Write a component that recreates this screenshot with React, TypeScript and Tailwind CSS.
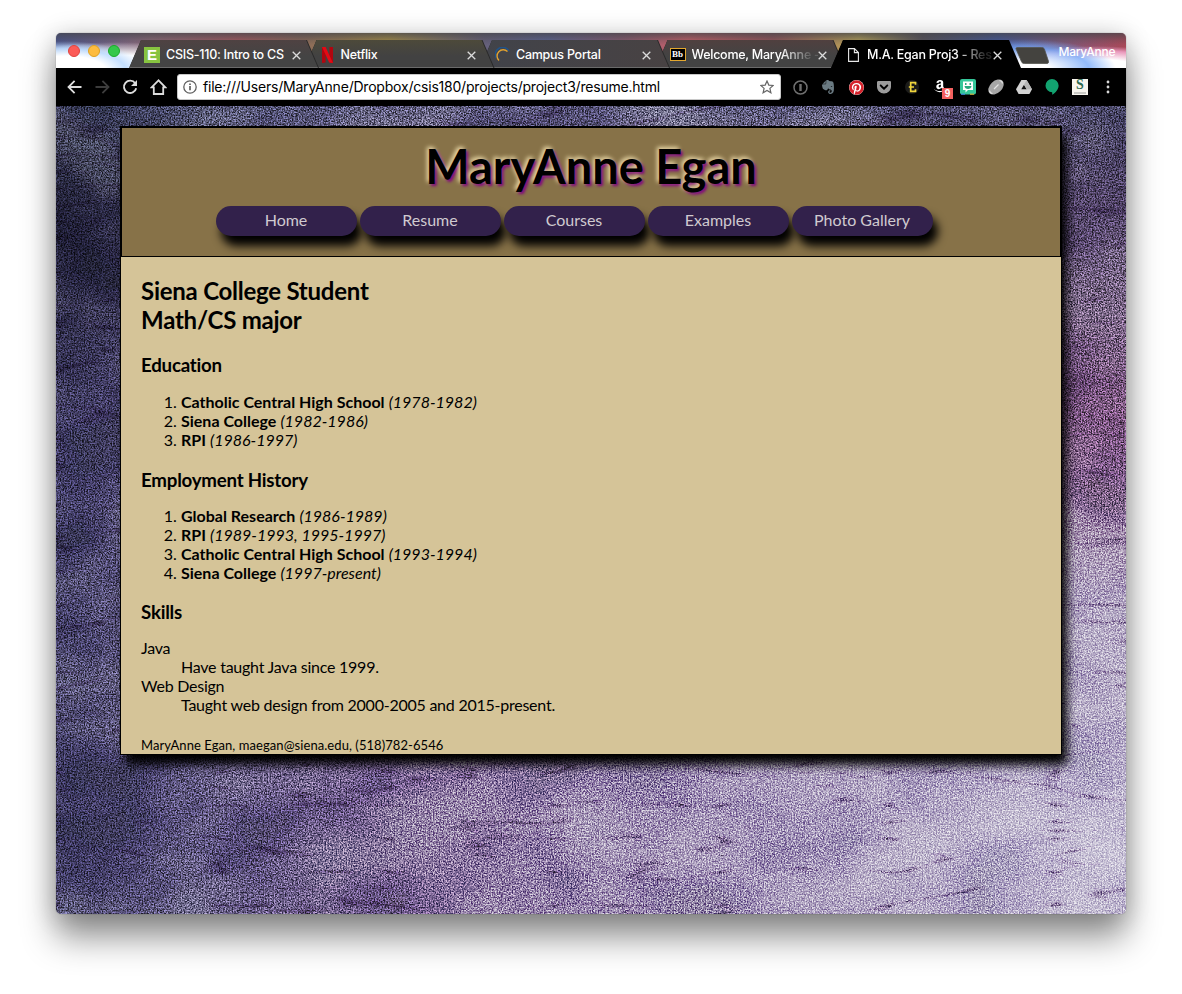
import React from "react";
import { FaPinterest, FaEvernote, FaAmazon, FaGetPocket } from "react-icons/fa";

type Tab = { title: string; icon: React.ReactNode; iconBox: string; fade?: boolean; active?: boolean; z: string; tint: string };

const NetflixIcon = () => (
  <svg width="11" height="16" viewBox="0 0 11 16">
    <path d="M0 0h3.6v15.4L0 16z" fill="#b1060f" />
    <path d="M7.4 0H11v16l-3.6-.6z" fill="#b1060f" />
    <path d="M0 0h3.6L11 16l-3.8-.6z" fill="#e50914" />
  </svg>
);

const PortalIcon = () => (
  <svg width="16" height="16" viewBox="0 0 16 16" fill="none">
    <path d="M1.2 11A7 7 0 0 1 14 4" stroke="#1f5288" strokeWidth="1.5" />
    <path d="M4 13.5A5.5 5.5 0 0 1 12.5 4.5" stroke="#e0a030" strokeWidth="1.4" />
  </svg>
);

const FileIcon = () => (
  <svg width="11" height="14" viewBox="0 0 11 14" fill="none" stroke="#e8e8e8" strokeWidth="1.1">
    <path d="M.6.6h5.8l4 4v8.8H.6z" />
    <path d="M6.4.6v4h4" />
  </svg>
);

const tabs: Tab[] = [
  {
    title: "CSIS-110: Intro to CS",
    icon: <span className="flex h-4 w-4 items-center justify-center bg-[#87c440] font-['Liberation_Sans'] text-[15px] leading-none font-bold text-white">E</span>,
    iconBox: "ml-[15px] w-[22px]",
    z: "z-40",
    tint: "bg-[linear-gradient(#4f4242,#444_60%)]",
  },
  { title: "Netflix", icon: <NetflixIcon />, iconBox: "ml-[17px] w-[19px]", z: "z-30", tint: "bg-[linear-gradient(#4d4a3a,#424242_60%)]" },
  { title: "Campus Portal", icon: <PortalIcon />, iconBox: "ml-[15px] w-[21px]", z: "z-20", tint: "bg-[linear-gradient(90deg,#41434a,#484243)]" },
  {
    title: "Welcome, MaryAnne -",
    icon: <span className="flex h-[13px] w-4 items-center justify-center border border-[#e3a72f] bg-black font-['Liberation_Serif'] text-[9px] leading-none font-bold text-white">Bb</span>,
    iconBox: "ml-[14px] w-[22px]",
    fade: true,
    z: "z-10",
    tint: "bg-[linear-gradient(#50403f,#434343_60%)]",
  },
  { title: "M.A. Egan Proj3 - Res", icon: <FileIcon />, iconBox: "ml-[17px] w-[19px]", fade: true, active: true, z: "z-50", tint: "bg-black" },
];

const CloseIcon = () => (
  <svg width="9" height="9" viewBox="0 0 9 9" stroke="#dcdcdc" strokeWidth="1.3">
    <path d="M.7.7l7.6 7.6M8.3.7L.7 8.3" />
  </svg>
);

function BrowserTab({ tab }: { tab: Tab }) {
  return (
    <div className={`relative -mr-[14.5px] h-7 w-[190px] shrink-0 [clip-path:polygon(0_100%,12px_0,178px_0,100%_100%)] ${tab.z} ${tab.active ? "bg-black" : "bg-[#292929]"}`}>
      <div className={`flex h-full w-[189px] items-center [clip-path:polygon(0_100%,12px_0,177px_0,100%_100%)] ${tab.tint} ${tab.active ? "" : "border-b border-[#6b6b6b]"}`}>
        <span className={`flex shrink-0 items-center pt-0.5 ${tab.iconBox}`}>{tab.icon}</span>
        <span className={`w-[126px] shrink-0 pt-[3px] font-[Inter] text-[12.5px] font-medium tracking-[-0.02em] whitespace-nowrap text-white ${tab.fade ? "[mask-image:linear-gradient(90deg,#000_70%,rgba(0,0,0,0.15)_94%)]" : ""}`}>{tab.title}</span>
        <span className="flex shrink-0 pt-[3px]"><CloseIcon /></span>
      </div>
    </div>
  );
}

const Slot = ({ children }: { children: React.ReactNode }) => <span className="flex w-7 shrink-0 items-center justify-center">{children}</span>;

function Toolbar() {
  return (
    <div className="flex h-[38px] items-center bg-black pl-1">
      <Slot>
        <svg width="15" height="14" viewBox="0 0 15 14" fill="none" stroke="#dcdcdc" strokeWidth="1.8"><path d="M14.5 7H1.8M7.6.9L1.5 7l6.1 6.1" /></svg>
      </Slot>
      <Slot>
        <svg width="15" height="14" viewBox="0 0 15 14" fill="none" stroke="#3c3c3c" strokeWidth="1.8"><path d="M.5 7h12.7M7.4.9L13.5 7l-6.1 6.1" /></svg>
      </Slot>
      <Slot>
        <svg width="16" height="16" viewBox="0 0 16 16" fill="none"><path d="M13.2 4.2A6.2 6.2 0 1 0 14.2 9.3" stroke="#dcdcdc" strokeWidth="1.9" /><path d="M15 1v6H9z" fill="#dcdcdc" /></svg>
      </Slot>
      <Slot>
        <svg width="17" height="16" viewBox="0 0 17 16" fill="none" stroke="#dcdcdc" strokeWidth="1.8"><path d="M8.5 1.4L1.6 8.4h2.2V15h9.4V8.4h2.2z" /></svg>
      </Slot>
      <div className="ml-[5px] flex h-[26px] w-[604px] shrink-0 items-center rounded-[3px] border border-[#c8c8c8] bg-white">
        <svg className="ml-[5px] shrink-0" width="14" height="14" viewBox="0 0 14 14" fill="none" stroke="#5f5f5f" strokeWidth="1.3"><circle cx="7" cy="7" r="6.2" /><path d="M7 6v4.3M7 3.4v1.5" strokeWidth="1.7" /></svg>
        <span className="mb-0.5 ml-[6px] flex-1 font-[Inter] text-[14px] tracking-[-0.015em] whitespace-nowrap text-black">file:///Users/MaryAnne/Dropbox/csis180/projects/project3/resume.html</span>
        <svg className="mr-[6px] shrink-0" width="14" height="14" viewBox="0 0 14 14" fill="none" stroke="#666" strokeWidth="1.2"><path d="M7 1l1.8 4.1 4.4.4-3.3 2.9 1 4.4L7 10.5l-3.9 2.3 1-4.4L.8 5.500l4.400-.4z" /></svg>
      </div>
      <div className="ml-[5px] flex items-center">
        <Slot>
          <svg width="15" height="15" viewBox="0 0 15 15" fill="none" stroke="#707070"><circle cx="7.500" cy="7.500" r="6.500" strokeWidth="1.500" /><path d="M7.500 4v7" strokeWidth="2.400" /></svg>
        </Slot>
        <Slot><FaEvernote size={16} color="#6a7a82" /></Slot>
        <Slot><span className="flex rounded-full bg-white"><FaPinterest size={15} color="#d5222b" /></span></Slot>
        <Slot><FaGetPocket size={16} color="#9c9c9c" /></Slot>
        <Slot>
          <svg width="14" height="14" viewBox="0 0 14 14"><circle cx="7" cy="7" r="7" fill="#1c1c1a" /><path d="M10.500 4.800V2.700H5.700v8.600h4.800V9.200M3.800 7H9" fill="none" stroke="#f0d53c" strokeWidth="1.700" /></svg>
        </Slot>
        <Slot>
          <span className="relative flex h-4 w-4 justify-center">
            <FaAmazon size={14} color="#ffffff" />
            <span className="absolute top-[9px] left-[10px] flex h-[11px] w-[11px] items-center justify-center bg-[#f4605f] font-['Liberation_Sans'] text-[10px] leading-none font-bold text-white">9</span>
          </span>
        </Slot>
        <Slot>
          <svg width="16" height="16" viewBox="0 0 16 16"><rect width="16" height="15.500" rx="2" fill="#35c79a" /><path d="M3 2.500h10v8.500H8l-2.500 2.500V11H3z" fill="#fff" /><path d="M5 4h1.500v2H5zM9.500 4H11v2H9.500zM4.500 7h7c0 4-7 4-7 0z" fill="#27a77e" /><path d="M1 15.200h4" stroke="#4285f4" /><path d="M10 15.200h4" stroke="#f0b030" /></svg>
        </Slot>
        <Slot>
          <svg width="16" height="16" viewBox="0 0 16 16"><ellipse cx="8" cy="8" rx="9" ry="6" transform="rotate(-44 8 8)" fill="#a6a6a6" /><path d="M6 10l4.500-4.500M11.500 1.500c1.500.2 2.800 1.300 3 3M1.500 11.500c.2 1.500 1.300 2.800 3 3" fill="none" stroke="#e4e4e4" strokeWidth="1.200" /></svg>
        </Slot>
        <Slot>
          <svg width="16" height="14" viewBox="0 0 16 14"><path d="M5.400 0h5.200L16 9.300 13.400 14H2.600L0 9.300z" fill="#d2d2d2" /><path d="M8 4.700l2.700 4.600H5.300z" fill="#111" /><path d="M10.600 0L16 9.300h-5.300L8 4.700z" fill="#b5b5b5" /></svg>
        </Slot>
        <Slot>
          <svg width="14" height="16" viewBox="0 0 14 16"><path d="M7 0a6.600 6.600 0 0 1 6.600 6.600c0 3.800-3 7.400-6.400 9.200v-2.600A6.600 6.600 0 1 1 7 0z" fill="#12a370" /></svg>
        </Slot>
        <Slot><span className="flex h-4 w-4 flex-col items-center bg-[#f7f5ee] font-['Liberation_Serif'] text-[14px] leading-[12px] font-bold text-[#2f6a50]">S<span className="mt-px block h-[2px] w-3 bg-[#c9c9c4]" /></span></Slot>
        <Slot>
          <svg width="4" height="14" viewBox="0 0 4 14" fill="#d8d8d8"><circle cx="2" cy="2" r="1.400" /><circle cx="2" cy="7" r="1.400" /><circle cx="2" cy="12" r="1.400" /></svg>
        </Slot>
      </div>
    </div>
  );
}

function Texture() {
  return (
    <div className="absolute inset-0 isolate overflow-hidden">
      <div className="absolute inset-0 bg-[radial-gradient(ellipse_180px_320px_at_0%_0%,rgba(6,8,18,0.95)_0%,rgba(10,12,25,0.65)_45%,transparent_100%),radial-gradient(ellipse_at_100%_0%,rgba(62,46,74,0.9)_0%,transparent_32%),radial-gradient(ellipse_at_100%_38%,rgba(122,80,120,0.85)_0%,transparent_26%),radial-gradient(ellipse_at_100%_92%,#c2bcd2_0%,rgba(176,166,194,0.9)_18%,transparent_52%),linear-gradient(90deg,#454366_0%,#5c567c_13%,#7c6692_36%,#8e7aa3_60%,#9682a8_100%)]" />
      <div className="absolute inset-0 bg-[linear-gradient(180deg,rgba(80,86,112,0.75)_0%,rgba(70,70,100,0.3)_12%,transparent_35%)]" />
      <svg className="absolute inset-0 h-full w-full opacity-30 mix-blend-soft-light">
        <filter id="mottle" x="0" y="0" width="100%" height="100%" colorInterpolationFilters="sRGB">
          <feTurbulence type="fractalNoise" baseFrequency="0.009 0.013" numOctaves="5" seed="12" />
          <feColorMatrix values="2.600 0 0 0 -0.800  2.700 0 0 0 -0.900  2.200 0 0 0 -0.550  0 0 0 0 1" />
        </filter>
        <rect width="100%" height="100%" filter="url(#mottle)" />
      </svg>
      <svg className="absolute inset-0 h-full w-full mix-blend-multiply">
        <filter id="streaks" x="0" y="0" width="100%" height="100%" colorInterpolationFilters="sRGB">
          <feTurbulence type="turbulence" baseFrequency="0.006 0.03" numOctaves="4" seed="8" />
          <feColorMatrix values="3 0 0 0 0.580  3.400 0 0 0 0.500  2.600 0 0 0 0.640  0 0 0 0 1" />
        </filter>
        <rect width="100%" height="100%" filter="url(#streaks)" />
      </svg>
      <svg className="absolute inset-0 h-full w-full opacity-70 mix-blend-overlay">
        <filter id="grain" x="0" y="0" width="100%" height="100%" colorInterpolationFilters="sRGB">
          <feTurbulence type="fractalNoise" baseFrequency="0.71 0.67" numOctaves="3" seed="3" />
          <feColorMatrix values="1.500 1.500 1 0 -1.500  1.500 1.500 1 0 -1.500  1.500 1.500 1 0 -1.500  0 0 0 0 1" />
        </filter>
        <rect width="100%" height="100%" filter="url(#grain)" />
      </svg>
    </div>
  );
}

const Section = ({ className, children }: { className: string; children: React.ReactNode }) => (
  <h3 className={`text-[18.700px] leading-[22px] font-bold tracking-[-0.012em] ${className}`}>{children}</h3>
);

function Entries({ items }: { items: [string, string][] }) {
  return (
    <ol className="list-decimal pl-10">
      {items.map(([place, years]) => (
        <li key={place}>
          <b>{place}</b> <i>({years})</i>
        </li>
      ))}
    </ol>
  );
}

function Resume() {
  return (
    <div className="relative flex h-[629px] w-[942px] flex-col border border-black bg-[#d5c498] font-[Lato] text-[16px] leading-[19px] text-black shadow-[5px_10px_10px_#000]">
      <header className="h-[130px] shrink-0 border border-black bg-[#877248]">
        <h1 className="flex h-[78px] items-center justify-center pb-0.5 text-[47px] leading-none font-bold [text-shadow:-2px_-2px_4px_#ead9a8,2px_2px_3px_#800080]">MaryAnne Egan</h1>
        <nav className="flex gap-[3px] pl-[94px]">
          {["Home", "Resume", "Courses", "Examples", "Photo Gallery"].map((label) => (
            <a key={label} className="flex h-[30px] w-[141px] items-center justify-center rounded-[15px] bg-[#32214b] pr-px pb-[3px] text-[#d0cad0] shadow-[5px_10px_10px_#000]">{label}</a>
          ))}
        </nav>
      </header>
      <main className="px-5 pt-[19px]">
        <h2 className="text-[24px] leading-[29px] font-bold tracking-[-0.010em]">Siena College Student<br />Math/CS major</h2>
        <Section className="mt-5 mb-4">Education</Section>
        <Entries items={[["Catholic Central High School", "1978-1982"], ["Siena College", "1982-1986"], ["RPI", "1986-1997"]]} />
        <Section className="mt-5 mb-[15px]">Employment History</Section>
        <Entries items={[["Global Research", "1986-1989"], ["RPI", "1989-1993, 1995-1997"], ["Catholic Central High School", "1993-1994"], ["Siena College", "1997-present"]]} />
        <Section className="mt-[19px] mb-[15px]">Skills</Section>
        <dl className="tracking-[-0.015em]">
          <dt>Java</dt>
          <dd className="pl-10">Have taught Java since 1999.</dd>
          <dt>Web Design</dt>
          <dd className="pl-10">Taught web design from 2000-2005 and 2015-present.</dd>
        </dl>
      </main>
      <footer className="mt-auto px-5 text-[13px] leading-[18px] tracking-[0.005em]">MaryAnne Egan, maegan@siena.edu, (518)782-6546</footer>
    </div>
  );
}

export default function App() {
  return (
    <div className="flex h-[994px] w-[1182px] items-start overflow-hidden bg-white pt-[33px] pl-14">
      <div className="h-[881px] w-[1070px] shrink-0 rounded-[5px] shadow-[0_0_1px_rgba(0,0,0,0.6),0_24px_34px_rgba(0,0,0,0.42),0_2px_26px_rgba(0,0,0,0.2)]">
        <div className="flex h-full flex-col overflow-hidden rounded-[5px]">
          <div className="flex h-[35px] shrink-0 items-end bg-[linear-gradient(180deg,rgba(70,70,75,0.75)_0,rgba(70,70,75,0.25)_7px,transparent_12px),radial-gradient(ellipse_80px_30px_at_10px_38px,#fff_50%,rgba(190,220,255,0.9)_75%,transparent),radial-gradient(ellipse_120px_26px_at_60px_35px,#fff_50%,transparent),radial-gradient(ellipse_90px_30px_at_970px_36px,#fff_25%,rgba(120,170,250,0.8)_70%,transparent),radial-gradient(ellipse_100px_24px_at_1040px_37px,#fff_45%,rgba(250,170,210,0.8)_80%,transparent),linear-gradient(90deg,#4a548c_0,#8e6a78_9%,#a85a60_17%,#8c6a5a_23%,#a89048_31%,#66607a_40%,#5d6494_46%,#8a5b70_53%,#c86068_59%,#96545a_67%,#b8a458_75%,#55515a_81%,#43589c_88%,#7c5878_94%,#a84858_100%)]">
            <div className="flex h-full items-center gap-2 pl-3">
              <span className="h-3 w-3 rounded-full border border-[#e0443e] bg-[#fc5b57]" />
              <span className="h-3 w-3 rounded-full border border-[#dea123] bg-[#fdbc40]" />
              <span className="h-3 w-3 rounded-full border border-[#1aab29] bg-[#34c84a]" />
            </div>
            <div className="ml-[9px] flex">
              {tabs.map((tab) => <BrowserTab key={tab.title} tab={tab} />)}
            </div>
            <svg className="mb-1 ml-[8px] shrink-0" width="34" height="17" viewBox="0 0 34 17"><path d="M3 .5h23.500c1.500 0 2.500.6 3 1.800l4 12c.4 1.300-.3 2.200-1.500 2.200H9.500c-1.500 0-2.600-.6-3-1.800L1 2C.7 1 1.500.5 3 .5z" fill="#44433f" stroke="#55554f" strokeWidth=".8" /></svg>
            <span className="mb-[8px] ml-[10px] font-[Inter] text-[12px] leading-[16px] font-medium tracking-[-0.020em] text-white">MaryAnne</span>
          </div>
          <Toolbar />
          <div className="relative flex flex-1 items-start justify-center pt-5">
            <Texture />
            <Resume />
          </div>
        </div>
      </div>
    </div>
  );
}
